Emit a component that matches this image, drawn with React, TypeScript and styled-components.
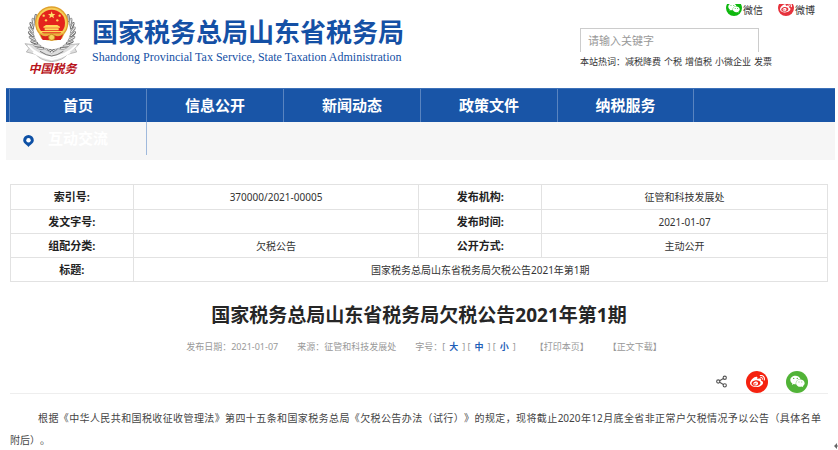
import React from "react";
import styled, { createGlobalStyle } from "styled-components";
import { FaWeibo, FaWeixin } from "react-icons/fa";
import { Share2 } from "lucide-react";

const GlobalStyle = createGlobalStyle`
  * { box-sizing: border-box; }
  body {
    margin: 0;
    background: #fff;
    color: #333;
    font-family: "Noto Sans", "Noto Sans CJK SC", sans-serif;
    font-size: 10px;
    text-spacing-trim: space-all;
    overflow: hidden;
  }
  h1, h2, p, ul { margin: 0; padding: 0; }
  a { color: inherit; text-decoration: none; }
`;

const Page = styled.div`
  padding-left: 6px;
`;

const Header = styled.header`
  display: flex;
  justify-content: space-between;
  height: 88px;
  padding: 4px 23px 0 18px;
`;

const Brand = styled.a`
  display: flex;
  gap: 11px;
`;

const EmblemColumn = styled.div`
  display: flex;
  flex-direction: column;
  align-items: center;
  width: 57px;
`;

const EmblemCaption = styled.span`
  color: #b8141c;
  font-size: 12px;
  font-style: italic;
  font-weight: 700;
  line-height: 14px;
`;

const BrandText = styled.div`
  display: flex;
  flex-direction: column;
  padding-top: 12px;
  color: #1450a5;
  white-space: nowrap;
`;

const BrandName = styled.span`
  font-size: 26px;
  font-weight: 700;
  line-height: 32px;
`;

const BrandEnglish = styled.span`
  font-family: "Liberation Serif", serif;
  font-size: 12px;
  line-height: 18px;
`;

const Tools = styled.div`
  display: flex;
  flex-direction: column;
  width: 235px;
`;

const SocialLinks = styled.div`
  display: flex;
  justify-content: flex-end;
  gap: 15px;
`;

const SocialLink = styled.a`
  display: flex;
  gap: 1px;
  height: 12px;
  line-height: 12px;
`;

const IconClip = styled.span`
  display: flex;
  align-items: flex-end;
  height: 12px;
  overflow: hidden;
`;

const Badge = styled.span<{ $color: string; $size: number }>`
  display: flex;
  flex: none;
  align-items: center;
  justify-content: center;
  width: ${(p) => p.$size}px;
  height: ${(p) => p.$size}px;
  border-radius: 50%;
  background: ${(p) => p.$color};
  color: #fff;
`;

const SearchInput = styled.input`
  width: 179px;
  height: 24px;
  margin-top: 12px;
  padding: 0 7px;
  border: 1px solid #ccc;
  border-bottom: 0;
  outline: 0;
  font-family: inherit;
  font-size: 11px;
  &::placeholder { color: #999; }
`;

const HotWords = styled.p`
  display: flex;
  gap: 3px;
  margin-top: 3px;
  font-size: 9px;
  line-height: 14px;
  white-space: nowrap;
`;

const Nav = styled.nav`
  margin-right: 3px;
  background: #f6f6f6;
`;

const NavRow = styled.ul`
  display: flex;
  height: 34px;
  padding-left: 3px;
  border-top: 1px solid #3c70b8;
  background: #1955a7;
  list-style: none;
`;

const NavItem = styled.li`
  width: 137px;
  border-left: 1px solid #5984c0;
  &:last-child {
    border-right: 1px solid #5984c0;
  }
`;

const NavLink = styled.a`
  display: block;
  color: #fff;
  font-size: 15px;
  font-weight: 700;
  line-height: 33px;
  text-align: center;
`;

const SubRow = styled.div`
  display: flex;
  height: 38px;
`;

const SubItem = styled.div`
  display: flex;
  align-items: center;
  gap: 14px;
  width: 141px;
  height: 33px;
  padding: 5px 0 0 17px;
  border-right: 1px solid #9fb9dc;
`;

const SubLink = styled.a`
  padding-bottom: 6px;
  color: #fff;
  font-size: 15px;
  font-weight: 700;
  line-height: 22px;
`;

const Main = styled.main`
  padding: 24px 10px 0 4px;
`;

const InfoTable = styled.table`
  width: 100%;
  border-collapse: collapse;
  table-layout: fixed;
  text-align: center;
  tr:first-child > * { height: 25px; }
`;

const LabelCell = styled.th`
  height: 24px;
  padding: 0;
  border: 1px solid #e2e2e2;
  color: #222;
  font-size: 11px;
  line-height: 16px;
`;

const ValueCell = styled.td`
  height: 24px;
  padding: 0;
  border: 1px solid #e2e2e2;
  line-height: 16px;
`;

const Title = styled.h1`
  margin-top: 19px;
  color: #262626;
  font-size: 19px;
  line-height: 28px;
  text-align: center;
`;

const Meta = styled.div`
  display: flex;
  justify-content: center;
  gap: 19px;
  margin-top: 10px;
  padding-left: 10px;
  color: #999;
  font-size: 9px;
  line-height: 16px;
  white-space: nowrap;
`;

const TextButton = styled.button`
  padding: 0;
  border: 0;
  background: none;
  color: inherit;
  font: inherit;
`;

const SizeButton = styled(TextButton)`
  margin: 0 4px;
  color: #1f5fb8;
  font-weight: 700;
`;

const ShareBar = styled.div`
  display: flex;
  align-items: center;
  justify-content: flex-end;
  gap: 18px;
  height: 39px;
  padding: 15px 20px 0 0;
  border-bottom: 1px solid #eee;
`;

const ShareButton = styled(TextButton)`
  display: flex;
  color: #555;
`;

const Article = styled.p`
  padding: 13px 7px 0 0;
  color: #444;
  line-height: 22px;
  text-align: justify;
  text-indent: 28px;
`;

const KeepTogether = styled.span`
  display: inline-block;
  text-indent: 0;
`;

const ReturnMark = styled.div`
  display: flex;
  justify-content: flex-end;
  margin-top: -9px;
`;

const leaves = Array.from({ length: 11 }, (_, i) => 100 + i * 12);

function Emblem() {
  return (
    <svg width="57" height="58" viewBox="0 0 171 174" aria-hidden="true">
      {[1, -1].map((side) => (
        <g key={side} transform={side === 1 ? undefined : "translate(168 0) scale(-1 1)"}>
          {leaves.map((deg, i) => {
            const a = (deg * Math.PI) / 180;
            const x = 84 + 63 * Math.cos(a);
            const y = 82 + 62 * Math.sin(a);
            return (
              <g key={deg} transform={`translate(${x} ${y}) rotate(${deg + 50})`}>
                <ellipse rx="12" ry="5" fill={i % 2 ? "#8a8a8a" : "#666"} />
                <ellipse cx="2" cy="6" rx="9" ry="3" fill="#c9c9c9" />
                <path d="M-9 0H9" stroke="#f4f4f4" strokeWidth="3" />
              </g>
            );
          })}
        </g>
      ))}
      <circle cx="83" cy="57" r="50" fill="#e0a02c" />
      <circle cx="83" cy="57" r="46" fill="#f6cf58" />
      <circle cx="83" cy="57" r="40" fill="#e4241c" />
      <path d="M83 22l3 8h8l-6 5 2 8-7-5-7 5 2-8-6-5h8z" fill="#ffe06a" />
      <g fill="#ffd95a">
        <circle cx="59" cy="35" r="3.5" />
        <circle cx="107" cy="35" r="3.5" />
        <circle cx="66" cy="49" r="3.5" />
        <circle cx="100" cy="49" r="3.5" />
        <path d="M58 68l8-5h34l8 5v3H58zM62 73h42v6H62zM50 81h66v4H50z" />
      </g>
      <path d="M44 88h78l-8 16q-31 12-62 0z" fill="#e9b13d" />
      <path d="M48 90q14 12 28 3v15H56zM118 90q-14 12-28 3v15h20z" fill="#d8231d" />
      <circle cx="83" cy="100" r="9" fill="#f7d45e" stroke="#c98a1e" strokeWidth="3" />
      <path
        d="M3 119l24 3q14 19 36 13l20 13 20-13q22 6 36-13l27-3-13 14 5 11-28 7q-12 18-47 22-35-4-47-22l-29-7 8-11z"
        fill="#dedede"
        stroke="#a0a0a0"
        strokeWidth="2"
      />
      <path d="M12 124q27 30 71 36 44-6 74-36M27 145q30 18 56 21 27-3 56-21" fill="none" stroke="#fff" strokeWidth="5" />
      <path d="M48 142q20 13 35 14 15-1 35-14" fill="none" stroke="#777" strokeWidth="3" />
    </svg>
  );
}

function Pin() {
  return (
    <svg width="11" height="12" viewBox="0 0 11 12" aria-hidden="true">
      <path d="M5.5 0a5.3 5.3 0 0 1 5.3 5.3C10.8 8.4 7.6 9.6 5.5 12 3.4 9.6.2 8.4.2 5.3A5.3 5.3 0 0 1 5.5 0z" fill="#0d50a5" />
      <circle cx="5.5" cy="5.2" r="2.2" fill="#fff" />
    </svg>
  );
}

const navItems = ["首页", "信息公开", "新闻动态", "政策文件", "纳税服务"];
const hotWords = ["减税降费", "个税", "增值税", "小微企业", "发票"];
const infoRows = [
  ["索引号:", "370000/2021-00005", "发布机构:", "征管和科技发展处"],
  ["发文字号:", "", "发布时间:", "2021-01-07"],
  ["组配分类:", "欠税公告", "公开方式:", "主动公开"],
];

export default function App() {
  return (
    <Page lang="zh-CN">
      <GlobalStyle />
      <Header>
        <Brand href="#">
          <EmblemColumn>
            <Emblem />
            <EmblemCaption>中国税务</EmblemCaption>
          </EmblemColumn>
          <BrandText>
            <BrandName>国家税务总局山东省税务局</BrandName>
            <BrandEnglish>Shandong Provincial Tax Service, State Taxation Administration</BrandEnglish>
          </BrandText>
        </Brand>
        <Tools>
          <SocialLinks>
            <SocialLink href="#">
              <IconClip><Badge $color="#0fb80f" $size={16}><FaWeixin size={12} /></Badge></IconClip>
              微信
            </SocialLink>
            <SocialLink href="#">
              <IconClip><Badge $color="#e6323c" $size={16}><FaWeibo size={12} /></Badge></IconClip>
              微博
            </SocialLink>
          </SocialLinks>
          <SearchInput type="text" aria-label="搜索" placeholder="请输入关键字" />
          <HotWords>
            <span>本站热词：<a href="#">{hotWords[0]}</a></span>
            {hotWords.slice(1).map((w) => <a key={w} href="#">{w}</a>)}
          </HotWords>
        </Tools>
      </Header>

      <Nav>
        <NavRow>
          {navItems.map((item) => (
            <NavItem key={item}><NavLink href="#">{item}</NavLink></NavItem>
          ))}
        </NavRow>
        <SubRow>
          <SubItem>
            <Pin />
            <SubLink href="#">互动交流</SubLink>
          </SubItem>
        </SubRow>
      </Nav>

      <Main>
        <InfoTable>
          <colgroup>
            <col width="15%" />
            <col width="35%" />
            <col width="15%" />
            <col width="35%" />
          </colgroup>
          <tbody>
            {infoRows.map(([l1, v1, l2, v2]) => (
              <tr key={l1}>
                <LabelCell scope="row">{l1}</LabelCell>
                <ValueCell>{v1}</ValueCell>
                <LabelCell scope="row">{l2}</LabelCell>
                <ValueCell>{v2}</ValueCell>
              </tr>
            ))}
            <tr>
              <LabelCell scope="row">标题:</LabelCell>
              <ValueCell colSpan={3}>国家税务总局山东省税务局欠税公告2021年第1期</ValueCell>
            </tr>
          </tbody>
        </InfoTable>

        <Title>国家税务总局山东省税务局欠税公告2021年第1期</Title>
        <Meta>
          <span>发布日期：2021-01-07</span>
          <span>来源：征管和科技发展处</span>
          <span>
            字号：[<SizeButton>大</SizeButton>] [<SizeButton>中</SizeButton>] [<SizeButton>小</SizeButton>]
          </span>
          <TextButton>【打印本页】</TextButton>
          <TextButton>【正文下载】</TextButton>
        </Meta>
        <ShareBar>
          <ShareButton aria-label="分享"><Share2 size={13} strokeWidth={2} /></ShareButton>
          <ShareButton aria-label="分享到微博">
            <Badge $color="#f5220f" $size={22}><FaWeibo size={15} /></Badge>
          </ShareButton>
          <ShareButton aria-label="分享到微信">
            <Badge $color="#51b337" $size={22}><FaWeixin size={15} /></Badge>
          </ShareButton>
        </ShareBar>
        <Article>
          根据《中华人民共和国税收征收管理法》第四十五条和国家税务总局《欠税公告办法（试行）》的规定，现将截止2020年12月底全省非正常户欠税情况予以公告（具体名单<KeepTogether>附后）。</KeepTogether>
        </Article>
      </Main>
      <ReturnMark>
        <svg width="4" height="8" viewBox="0 0 4 8" aria-hidden="true">
          <path d="M0 4l3-3v6zM2 3.5h2v1H2z" fill="#666" />
        </svg>
      </ReturnMark>
    </Page>
  );
}
